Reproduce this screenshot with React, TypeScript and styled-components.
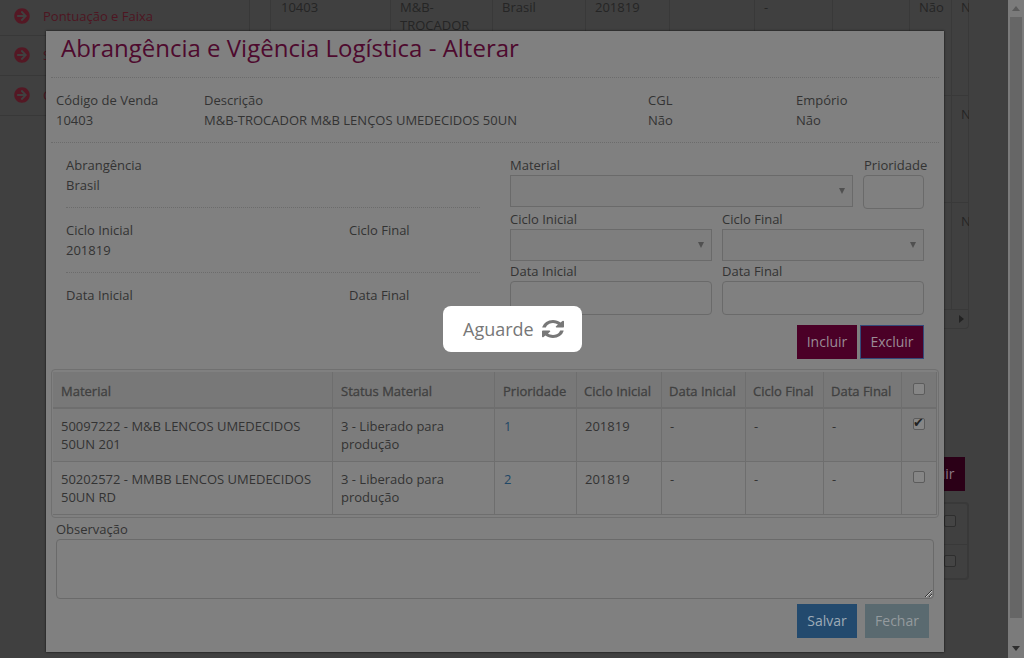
import styled, { createGlobalStyle } from "styled-components";
import { FaArrowCircleRight } from "react-icons/fa";

const GlobalStyle = createGlobalStyle`
  * {
    box-sizing: border-box;
  }
  html,
  body {
    margin: 0;
    height: 100%;
    overflow: hidden;
    background: #404040;
    font-family: "Open Sans", "Liberation Sans", sans-serif;
    font-size: 13px;
    line-height: 20px;
    color: #333;
  }
`;

const sideItems = ["Pontuação e Faixa", "Segmentação", "Ciclos"];
const pageColumns = [120, 102, 93, 84, 85, 78, 77, 42, 18];
const pageRows = [
  ["10403", "M&B-TROCADOR", "Brasil", "201819", "", "-", "", "Não", "Não"],
  ["", "", "", "", "", "", "", "Não", "Não"],
  ["", "", "", "", "", "", "", "Não", "Não"],
];
const materialColumns = [280, 162, 82, 85, 84, 78, 78, 35];
const materials = [
  {
    name: "50097222 - M&B LENCOS UMEDECIDOS 50UN 201",
    priority: "1",
    checked: true,
  },
  {
    name: "50202572 - MMBB LENCOS UMEDECIDOS 50UN RD",
    priority: "2",
    checked: false,
  },
];

const RefreshIcon = () => (
  <svg
    width="22"
    height="18"
    viewBox="128 128 1536 1536"
    preserveAspectRatio="none"
    fill="currentColor"
  >
    <path d="M1639 1056q0 5-1 7-64 268-268 434.5t-478 166.5q-146 0-282.500-55t-243.500-157l-129 129q-19 19-45 19t-45-19-19-45v-448q0-26 19-45t45-19h448q26 0 45 19t19 45-19 45l-137 137q71 66 161 102t187 36q134 0 250-65t186-179q11-17 53-117 8-23 30-23h192q13 0 22.500 9.500t9.500 22.500zm25-800v448q0 26-19 45t-45 19h-448q-26 0-45-19t-19-45 19-45l138-138q-148-137-349-137-134 0-250 65t-186 179q-11 17-53 117-8 23-30 23h-199q-13 0-22.500-9.500t-9.500-22.500v-7q65-268 270-434.500t480-166.500q146 0 284 55.500t245 156.500l130-129q19-19 45-19t45 19 19 45z" />
  </svg>
);

const App = () => {
  return (
    <Screen>
      <GlobalStyle />
      <Page>
        <Sidebar>
          {sideItems.map((item, i) => (
            <SideItem key={item} $first={i === 0}>
              <FaArrowCircleRight size={16} />
              <span>{item}</span>
            </SideItem>
          ))}
        </Sidebar>
        <Main>
          <PageTableBox>
            <PageTable>
              <colgroup>
                {pageColumns.map((w, i) => (
                  <col key={i} width={w} />
                ))}
              </colgroup>
              <tbody>
                {pageRows.map((row, r) => (
                  <tr key={r}>
                    {row.map((cell, c) => (
                      <td key={c}>{cell}</td>
                    ))}
                  </tr>
                ))}
              </tbody>
            </PageTable>
            <HScroll>
              <HScrollArrow />
            </HScroll>
          </PageTableBox>
          <PageButtons>
            <PageButton>Excluir</PageButton>
          </PageButtons>
          <PageChecks>
            <PageCheckRow>
              <PageCheck />
            </PageCheckRow>
            <PageCheckRow>
              <PageCheck />
            </PageCheckRow>
          </PageChecks>
        </Main>
      </Page>
      <Scrollbar>
        <ScrollUp />
        <ScrollThumb />
        <ScrollDown />
      </Scrollbar>

      <Modal>
        <Title>Abrangência e Vigência Logística - Alterar</Title>
        <InfoRow>
          <Field>
            <div>Código de Venda</div>
            <div>10403</div>
          </Field>
          <Field>
            <div>Descrição</div>
            <div>M&amp;B-TROCADOR M&amp;B LENÇOS UMEDECIDOS 50UN</div>
          </Field>
          <Field>
            <div>CGL</div>
            <div>Não</div>
          </Field>
          <Field>
            <div>Empório</div>
            <div>Não</div>
          </Field>
        </InfoRow>
        <Columns>
          <Summary>
            <SummaryRow>
              <div>
                <div>Abrangência</div>
                <div>Brasil</div>
              </div>
            </SummaryRow>
            <SummaryRow>
              <div>
                <div>Ciclo Inicial</div>
                <div>201819</div>
              </div>
              <div>Ciclo Final</div>
            </SummaryRow>
            <SummaryRow $last>
              <div>Data Inicial</div>
              <div>Data Final</div>
            </SummaryRow>
          </Summary>
          <Form>
            <FormRow>
              <FormField $width={343}>
                <label>Material</label>
                <SelectBox>
                  <Caret />
                </SelectBox>
              </FormField>
              <FormField $width={61} $inset>
                <label>Prioridade</label>
                <TextBox $height={34} />
              </FormField>
            </FormRow>
            <FormRow>
              <FormField $width={202}>
                <label>Ciclo Inicial</label>
                <SelectBox>
                  <Caret />
                </SelectBox>
              </FormField>
              <FormField $width={202}>
                <label>Ciclo Final</label>
                <SelectBox>
                  <Caret />
                </SelectBox>
              </FormField>
            </FormRow>
            <FormRow>
              <FormField $width={202}>
                <label>Data Inicial</label>
                <TextBox $height={34} />
              </FormField>
              <FormField $width={202}>
                <label>Data Final</label>
                <TextBox $height={34} />
              </FormField>
            </FormRow>
            <FormActions>
              <WineButton $width={60}>Incluir</WineButton>
              <WineButton $width={64} $focused>
                Excluir
              </WineButton>
            </FormActions>
          </Form>
        </Columns>
        <TableBox>
          <MaterialTable>
            <colgroup>
              {materialColumns.map((w, i) => (
                <col key={i} width={w} />
              ))}
            </colgroup>
            <thead>
              <tr>
                <th>Material</th>
                <th>Status Material</th>
                <th>Prioridade</th>
                <th>Ciclo Inicial</th>
                <th>Data Inicial</th>
                <th>Ciclo Final</th>
                <th>Data Final</th>
                <th>
                  <CheckBox type="checkbox" readOnly />
                </th>
              </tr>
            </thead>
            <tbody>
              {materials.map((m) => (
                <tr key={m.name}>
                  <td>{m.name}</td>
                  <td>3 - Liberado para produção</td>
                  <td>
                    <PriorityLink>{m.priority}</PriorityLink>
                  </td>
                  <td>201819</td>
                  <td>-</td>
                  <td>-</td>
                  <td>-</td>
                  <td>
                    <CheckBox type="checkbox" checked={m.checked} readOnly />
                  </td>
                </tr>
              ))}
            </tbody>
          </MaterialTable>
        </TableBox>
        <Notes>
          <label>Observação</label>
          <NotesInput />
        </Notes>
        <Footer>
          <FooterButton $variant="save">Salvar</FooterButton>
          <FooterButton $variant="close">Fechar</FooterButton>
        </Footer>
      </Modal>

      <LoadingLayer>
        <LoadingBox>
          Aguarde
          <RefreshIcon />
        </LoadingBox>
      </LoadingLayer>
    </Screen>
  );
};
export default App;

const Screen = styled.div`
  position: relative;
  width: 1024px;
  height: 658px;
  overflow: hidden;
  display: flex;
  background: #404040;
`;

const Page = styled.div`
  width: 1008px;
  display: flex;
  align-items: flex-start;
`;

const Sidebar = styled.div`
  width: 250px;
  height: 100%;
  border-right: 0;
`;

const SideItem = styled.div<{ $first?: boolean }>`
  height: ${(p) => (p.$first ? "36px" : "40px")};
  display: flex;
  align-items: center;
  gap: 13px;
  padding-left: 14px;
  padding-bottom: ${(p) => (p.$first ? "3px" : "1px")};
  border-bottom: 1px solid #383838;
  border-right: 1px solid #383838;
  color: #4e1622;
  svg {
    color: #541824;
    flex: none;
  }
`;

const Main = styled.div`
  width: 700px;
  margin-left: 20px;
  margin-top: -11px;
`;

const PageTableBox = styled.div`
  width: 699px;
  border-bottom: 1px solid #393939;
  border-right: 1px solid #393939;
  border-radius: 0 0 4px 4px;
`;

const PageTable = styled.table`
  width: 698px;
  table-layout: fixed;
  border-collapse: separate;
  border-spacing: 0;
  td {
    height: 107px;
    padding: 9px 9px 0;
    vertical-align: top;
    line-height: 18px;
    color: #252525;
    border-left: 1px solid #393939;
    border-bottom: 1px solid #393939;
    overflow: hidden;
  }
  td:first-child {
    padding-left: 10px;
  }
  td:last-child {
    padding-right: 0;
    white-space: nowrap;
  }
`;

const HScroll = styled.div`
  height: 18px;
  display: flex;
  align-items: center;
  justify-content: flex-end;
  padding-right: 4px;
`;

const HScrollArrow = styled.div`
  border-left: 5px solid #222;
  border-top: 4px solid transparent;
  border-bottom: 4px solid transparent;
`;

const PageButtons = styled.div`
  display: flex;
  justify-content: flex-end;
  padding-right: 5px;
  margin-top: 128px;
`;

const PageButton = styled.div`
  width: 64px;
  height: 34px;
  display: flex;
  align-items: center;
  justify-content: center;
  background: #2b0017;
  color: #8a7a84;
  font-size: 14px;
`;

const PageChecks = styled.div`
  width: 699px;
  height: 78px;
  margin-top: 11px;
  border: 2px solid #393939;
  border-radius: 4px;
`;

const PageCheckRow = styled.div`
  height: 40px;
  display: flex;
  align-items: flex-start;
  justify-content: flex-end;
  padding: 11px 11px 0 0;
  & + & {
    height: 36px;
    padding-top: 10px;
    border-top: 1px solid #393939;
  }
`;

const PageCheck = styled.div`
  width: 12px;
  height: 12px;
  border: 1px solid #2e2e2e;
  border-radius: 2px;
  background: #444;
`;

const Scrollbar = styled.div`
  width: 16px;
  height: 100%;
  display: flex;
  flex-direction: column;
  align-items: center;
  background: #7b7b7b;
`;

const ScrollUp = styled.div`
  margin: 6px 0 6px;
  border-bottom: 5px solid #5a5a5a;
  border-left: 4px solid transparent;
  border-right: 4px solid transparent;
`;

const ScrollThumb = styled.div`
  width: 12px;
  height: 601px;
  background: #666;
`;

const ScrollDown = styled.div`
  margin-top: 28px;
  border-top: 5px solid #2e2e2e;
  border-left: 4px solid transparent;
  border-right: 4px solid transparent;
`;

const Modal = styled.div`
  position: absolute;
  left: 46px;
  top: 31px;
  width: 898px;
  height: 621px;
  padding: 0 5px;
  background: #808080;
  box-shadow: 0 0 2px rgba(0, 0, 0, 0.8);
`;

const Title = styled.h1`
  margin: 0;
  height: 47px;
  padding: 0 0 0 10px;
  font-size: 24px;
  line-height: 34px;
  font-weight: 400;
  color: #4e0a2e;
  border-bottom: 1px dotted #6c6c6c;
`;

const InfoRow = styled.div`
  display: grid;
  grid-template-columns: 148px 444px 148px 148px;
  height: 65px;
  padding-top: 12px;
  border-bottom: 1px dotted #6c6c6c;
`;

const Field = styled.div`
  padding-left: 5px;
`;

const Columns = styled.div`
  display: flex;
  padding: 12px 0 10px;
`;

const Summary = styled.div`
  width: 414px;
  margin-left: 15px;
`;

const SummaryRow = styled.div<{ $last?: boolean }>`
  display: grid;
  grid-template-columns: 283px 131px;
  min-height: ${(p) => (p.$last ? "20px" : "53px")};
  padding-bottom: ${(p) => (p.$last ? "0" : "12px")};
  margin-bottom: ${(p) => (p.$last ? "0" : "12px")};
  border-bottom: ${(p) => (p.$last ? "0" : "1px dotted #6c6c6c")};
`;

const Form = styled.div`
  width: 414px;
  margin-left: 30px;
`;

const FormRow = styled.div`
  display: flex;
  gap: 10px;
`;

const FormField = styled.div<{ $width: number; $inset?: boolean }>`
  width: ${(p) => p.$width}px;
  label {
    display: block;
    white-space: nowrap;
    padding-left: ${(p) => (p.$inset ? "1px" : "0")};
  }
`;

const SelectBox = styled.div`
  height: 32px;
  display: flex;
  align-items: center;
  justify-content: flex-end;
  padding-right: 7px;
  border: 1px solid #6a6a6a;
  background: #7e7e7e;
`;

const Caret = styled.div`
  border-top: 6px solid #505050;
  border-left: 3px solid transparent;
  border-right: 3px solid transparent;
`;

const TextBox = styled.div<{ $height: number }>`
  height: ${(p) => p.$height}px;
  border: 1px solid #6a6a6a;
  border-radius: 4px;
`;

const FormActions = styled.div`
  display: flex;
  justify-content: flex-end;
  gap: 3px;
  margin-top: 10px;
`;

const WineButton = styled.div<{ $width: number; $focused?: boolean }>`
  width: ${(p) => p.$width}px;
  height: 34px;
  display: flex;
  align-items: center;
  justify-content: center;
  font-size: 14px;
  color: #9a8c96;
  background: #4b0027;
  border: 1px solid ${(p) => (p.$focused ? "#33497a" : "#4b0027")};
`;

const TableBox = styled.div`
  width: 888px;
  height: 149px;
  padding: 2px 1px;
  border: 1px solid #707070;
  border-radius: 4px;
`;

const MaterialTable = styled.table`
  width: 884px;
  table-layout: fixed;
  border-collapse: separate;
  border-spacing: 0;
  th {
    height: 37px;
    padding: 2px 8px 0;
    text-align: left;
    font-weight: 400;
    -webkit-text-stroke: 0.3px #404040;
    color: #404040;
    white-space: nowrap;
    background: #787878;
    border-right: 1px solid #6e6e6e;
    border-bottom: 2px solid #6e6e6e;
  }
  th:nth-child(n + 4) {
    padding-left: 7px;
  }
  td {
    height: 53px;
    padding: 8px;
    vertical-align: top;
    line-height: 18px;
    color: #333;
    border-right: 1px solid #6e6e6e;
    border-bottom: 1px solid #6e6e6e;
  }
  tbody tr:first-child td {
    background: #7c7c7c;
  }
  th:last-child,
  td:last-child {
    padding: 0 0 2px 11px;
  }
  td:last-child {
    padding-top: 9px;
  }
`;

const PriorityLink = styled.span`
  color: #1f4766;
  margin-left: 1px;
`;

const CheckBox = styled.input`
  appearance: none;
  display: block;
  width: 12px;
  height: 12px;
  margin: 0;
  position: relative;
  border: 1px solid #5c5c5c;
  border-radius: 2px;
  background: #868686;
  &:checked::after {
    content: "✔";
    position: absolute;
    left: -1px;
    top: -4px;
    font: 13px/16px "DejaVu Sans", sans-serif;
    color: #222;
  }
`;

const Notes = styled.div`
  padding: 1px 5px 0;
  label {
    display: block;
  }
`;

const NotesInput = styled.textarea`
  display: block;
  width: 878px;
  height: 60px;
  border: 1px solid #6a6a6a;
  border-radius: 4px;
  background: #808080;
  outline: none;
  resize: vertical;
`;

const Footer = styled.div`
  display: flex;
  justify-content: flex-end;
  gap: 8px;
  margin-top: 5px;
  padding-right: 10px;
`;

const FooterButton = styled.div<{ $variant: "save" | "close" }>`
  width: ${(p) => (p.$variant === "save" ? "60px" : "64px")};
  height: 34px;
  display: flex;
  align-items: center;
  justify-content: center;
  font-size: 14px;
  color: ${(p) => (p.$variant === "save" ? "#9eaab6" : "#949a9e")};
  background: ${(p) => (p.$variant === "save" ? "#234a6e" : "#5a6a70")};
`;

const LoadingLayer = styled.div`
  position: absolute;
  inset: 0;
  display: flex;
  align-items: center;
  justify-content: center;
`;

const LoadingBox = styled.div`
  width: 139px;
  height: 46px;
  margin-left: 1px;
  display: flex;
  align-items: center;
  gap: 8px;
  padding-left: 20px;
  border-radius: 8px;
  background: #fff;
  color: #777;
  font-size: 18px;
  font-weight: 400;
`;
